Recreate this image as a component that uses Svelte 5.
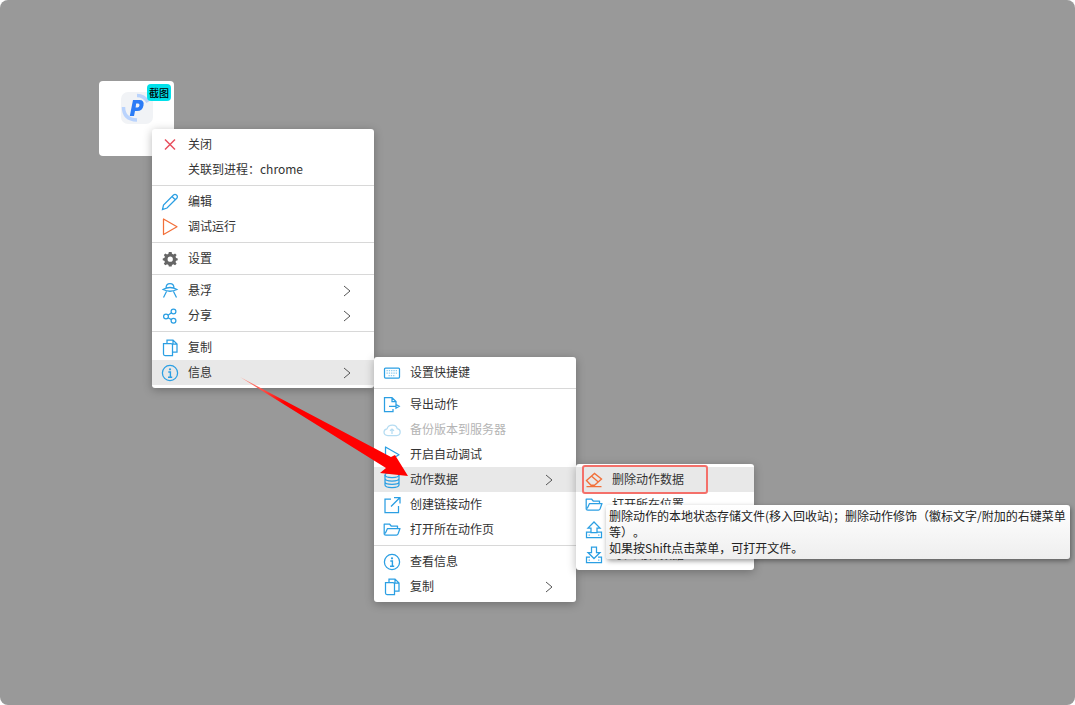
<script>
  const mainItems = [
    { icon: "close", label: "关闭" },
    { label: "关联到进程：chrome" },
    { sep: true },
    { icon: "pen", label: "编辑" },
    { icon: "playOrange", label: "调试运行" },
    { sep: true },
    { icon: "gear", label: "设置" },
    { sep: true },
    { icon: "ufo", label: "悬浮", more: true },
    { icon: "share", label: "分享", more: true },
    { sep: true },
    { icon: "copy", label: "复制" },
    { icon: "info", label: "信息", more: true, active: true },
  ];

  const infoItems = [
    { icon: "keyboard", label: "设置快捷键" },
    { sep: true },
    { icon: "export", label: "导出动作" },
    { icon: "cloud", label: "备份版本到服务器", disabled: true },
    { icon: "play", label: "开启自动调试" },
    { icon: "db", label: "动作数据", more: true, active: true },
    { icon: "link", label: "创建链接动作" },
    { icon: "folder", label: "打开所在动作页" },
    { sep: true },
    { icon: "info", label: "查看信息" },
    { icon: "copy", label: "复制", more: true },
  ];

  const dataItems = [
    { icon: "eraser", label: "删除动作数据", active: true },
    { icon: "folder", label: "打开所在位置" },
    { icon: "upload", label: "导出动作数据" },
    { icon: "download", label: "导入动作数据" },
  ];
</script>

{#snippet icon(name)}
  <svg class="icon" viewBox="0 0 18 18" width="18" height="18" fill="none" stroke="#2b9fe3" stroke-width="1.25">
    {#if name === "close"}
      <path d="M4 3.5 L14 13.5 M14 3.5 L4 13.5" stroke="#e8505f" stroke-width="1.5" />
    {:else if name === "pen"}
      <path d="M1.5 16.5 L2.5 12 L12.5 2 Q14 .8 15.5 2 Q17 3.5 16 5 L6 15 Z M11 3.5 L14.5 7" />
    {:else if name === "playOrange"}
      <path d="M2.5 1 V16.5 L16 8.8 Z" stroke="#f2703a" stroke-linejoin="round" />
    {:else if name === "play"}
      <path d="M2.5 1 V16.5 L16 8.8 Z" stroke-linejoin="round" />
    {:else if name === "gear"}
      <path
        transform="translate(1.3 1) scale(.88)"
        fill="#666"
        stroke="none"
        fill-rule="evenodd"
        d="M7.4 1 H10.6 L11 3.2 L12.6 3.9 L14.5 2.7 L16.3 4.6 L15 6.4 L15.7 8 L17.5 8.4 V10.6 L15.7 11 L15 12.6 L16.3 14.4 L14.5 16.3 L12.6 15.1 L11 15.8 L10.6 17.5 H7.4 L7 15.8 L5.4 15.1 L3.5 16.3 L1.7 14.4 L3 12.6 L2.3 11 L.5 10.6 V8.4 L2.3 8 L3 6.4 L1.7 4.6 L3.5 2.7 L5.4 3.9 L7 3.2 Z M9 6.3 A3 3 0 1 0 9 12.3 A3 3 0 1 0 9 6.3 Z"
      />
    {:else if name === "ufo"}
      <path d="M5 6 Q5 1.5 9 1.5 Q13 1.5 13 6 M2 7.5 Q9 3.5 16 7.5 Q9 11 2 7.5 Z M5.5 9.5 L2.5 15.5 M12.5 9.5 L15.5 15.5" />
    {:else if name === "share"}
      <circle cx="5" cy="9.5" r="2.4" />
      <circle cx="12.5" cy="4.5" r="2.4" />
      <circle cx="12.5" cy="13.8" r="2.4" />
      <path d="M7 8.2 L10.5 5.8 M7 10.7 L10.5 12.6" />
    {:else if name === "copy"}
      <path d="M6 4.5 V1 H12 L16 5 V13 H11.5 M12 1 V5 H16 M2.5 4.5 H10 Q11.5 4.5 11.5 6 V16.5 H4 Q2.5 16.5 2.5 15 Z" />
    {:else if name === "info"}
      <circle cx="9" cy="9" r="7.6" />
      <circle cx="9" cy="5.3" r="1.1" fill="#2b9fe3" stroke="none" />
      <path d="M7.3 8 H9.4 V13 M7 13.2 H11.2" stroke-width="1.4" />
    {:else if name === "keyboard"}
      <rect x="1.5" y="4" width="15" height="10" rx="1" />
      <path d="M3.5 6.5 H14.5 M3.5 9 H14.5 M5.5 11.7 H12.5" stroke-dasharray="1.3 1" stroke="#8ccbef" />
    {:else if name === "export"}
      <path d="M10 13 V15.5 H1.5 V1.5 H9 L13 5.5 V8 M9 1.5 V5.5 H13 M6 10.3 H13 M13 8.5 L16.2 10.3 L13 12.2 Z" />
    {:else if name === "cloud"}
      <path
        d="M5 14.5 Q1 14.5 1 11 Q1 8.4 4 7.8 Q5 4 9.5 4 Q13.5 4 14.2 7.7 Q17.2 8.2 17.2 11 Q17.2 14.5 13.5 14.5 Z M9 13 V8 M7 9.8 L9 8 L11 9.8"
        stroke="#b5dcf2"
      />
    {:else if name === "db"}
      <ellipse cx="9" cy="4" rx="7" ry="2.5" />
      <path d="M2 4 V14 Q2 16.5 9 16.5 Q16 16.5 16 14 V4 M2 7.5 Q2 10 9 10 Q16 10 16 7.5 M2 11 Q2 13.3 9 13.3 Q16 13.3 16 11" />
    {:else if name === "link"}
      <path d="M8 3 H2 V16.5 H15.5 V10 M8 10.5 L16.5 2 M11 1.5 H17 V7.5" />
    {:else if name === "folder"}
      <path d="M1.2 13.5 V3 H6.5 L8.2 5 H14.5 V7.5 M1.2 13.5 Q2 14 3 14 H13.5 Q14.5 14 15 13 L17 7.5 H4.5 L2.2 12.5" stroke-linejoin="round" />
    {:else if name === "eraser"}
      <path d="M1.5 9.5 L9.5 2.5 L16.5 8 L9.5 14.2 H6 Z M6.7 5.2 L13.3 11 M1.5 15.6 H16.5" stroke="#f2703a" stroke-width="1.35" />
    {:else if name === "upload"}
      <path d="M6 11.5 V7 H3 L9 1 L15 7 H12 V11.5 Z M6 11 H1.5 V16.5 H16.5 V11 H12 M3.7 14 H4.7 M13.3 14 H14.3" />
    {:else if name === "download"}
      <path d="M6.5 1 H11.5 V6.5 H15 L9 12.5 L3 6.5 H6.5 Z M5 11 H1.5 V16.5 H16.5 V11 H13 M3.7 14 H4.7 M13.3 14 H14.3" />
    {/if}
  </svg>
{/snippet}

{#snippet menu(items, cls)}
  <div class="menu {cls}">
    {#each items as item}
      {#if item.sep}
        <div class="sep"></div>
      {:else}
        <div class="row" class:active={item.active} class:disabled={item.disabled}>
          <span class="slot">
            {#if item.icon}{@render icon(item.icon)}{/if}
          </span>
          <span class="label">{item.label}</span>
          {#if item.more}
            <svg class="more" viewBox="0 0 8 12" width="8" height="12" fill="none" stroke="#555" stroke-width="1">
              <path d="M1 1 L7 6 L1 11" />
            </svg>
          {/if}
        </div>
      {/if}
    {/each}
  </div>
{/snippet}

<main class="desk">
  <div class="tile">
    <div class="logo">
      <svg viewBox="0 0 32 32" width="32" height="32">
        <rect width="32" height="32" rx="7" fill="#f1f3f6" />
        <path d="M2.5 15 Q2.5 27.5 16 28" fill="none" stroke="#b9d3fd" stroke-width="3.5" />
        <path d="M16 3.5 Q23 3.5 27 10" fill="none" stroke="#b9d3fd" stroke-width="3.5" />
        <path
          fill="#2b7cf6"
          fill-rule="evenodd"
          d="M12 8 H18.5 Q23.5 8 22.5 13.5 Q21.5 19 16 19 H14 L13 24 H8.8 Z M15.2 11.5 L14.6 15.5 H16.5 Q18.1 15.5 18.5 13.5 Q18.7 11.5 17.1 11.5 Z"
        />
      </svg>
    </div>
    <span class="badge">截图</span>
  </div>

  {@render menu(mainItems, "main")}
  {@render menu(infoItems, "info")}
  {@render menu(dataItems, "data")}

  <div class="marker"></div>

  <div class="tooltip">
    删除动作的本地状态存储文件(移入回收站)；删除动作修饰（徽标文字/附加的右键菜单等）。<br />
    如果按Shift点击菜单，可打开文件。
  </div>

  <svg class="arrow" viewBox="0 0 1075 705" width="1075" height="705">
    <defs>
      <linearGradient id="tail" gradientUnits="userSpaceOnUse" x1="240" y1="377" x2="285" y2="402">
        <stop offset="0" stop-color="#ff9f90" />
        <stop offset="1" stop-color="#ff0000" />
      </linearGradient>
    </defs>
    <polygon points="240,377 391,457 395,455 408,476 380,473 386,468" fill="url(#tail)" />
  </svg>
</main>

<style>
  :global(body) {
    background: #fff;
  }
  .desk {
    position: relative;
    width: 1075px;
    height: 705px;
    background: #999;
    border-radius: 8px;
    overflow: hidden;
    font-family: "Noto Sans CJK SC", "Liberation Sans", sans-serif;
    font-size: 12px;
    color: #333;
    text-spacing-trim: space-all;
  }
  .tile {
    position: absolute;
    left: 99px;
    top: 81px;
    width: 75px;
    height: 75px;
    background: #fff;
    border-radius: 4px;
    display: flex;
    justify-content: center;
    padding-top: 11px;
    box-sizing: border-box;
  }
  .logo {
    height: 32px;
  }
  .badge {
    position: absolute;
    top: 3px;
    right: 3px;
    width: 24px;
    height: 17px;
    line-height: 17px;
    background: #00e0ea;
    border-radius: 4px;
    color: #000;
    font-size: 10px;
    font-weight: 500;
    text-align: center;
    white-space: nowrap;
  }
  .menu {
    position: absolute;
    box-sizing: border-box;
    padding: 3px 0;
    background: #fff;
    border-radius: 3px;
    box-shadow: 0 2px 10px rgba(0, 0, 0, 0.28);
  }
  .main {
    left: 152px;
    top: 129px;
    width: 222px;
  }
  .info {
    left: 374px;
    top: 357px;
    width: 202px;
  }
  .data {
    left: 576px;
    top: 464px;
    width: 178px;
  }
  .row {
    display: flex;
    align-items: center;
    height: 25px;
    padding-left: 9px;
    white-space: nowrap;
  }
  .row.active {
    background: #e8e8e8;
  }
  .row.disabled {
    color: #b4b4b4;
  }
  .slot {
    display: flex;
    width: 18px;
    height: 18px;
    margin-right: 9px;
  }
  .label {
    flex: 1;
    margin-bottom: 2px;
  }
  .more {
    margin-right: 23px;
  }
  .sep {
    height: 1px;
    margin: 3px 0;
    background: #d8d8d8;
  }
  .marker {
    position: absolute;
    left: 582px;
    top: 465px;
    width: 122px;
    height: 25px;
    border: 2px solid #f4706a;
    border-radius: 3px;
  }
  .tooltip {
    position: absolute;
    left: 606px;
    top: 505px;
    width: 464px;
    height: 54px;
    box-sizing: border-box;
    padding: 3px;
    background: linear-gradient(#fff, #eee);
    border-radius: 3px;
    box-shadow: 1px 2px 5px rgba(0, 0, 0, 0.4);
    line-height: 16px;
    color: #222;
  }
  .arrow {
    position: absolute;
    left: 0;
    top: 0;
    pointer-events: none;
  }
</style>
